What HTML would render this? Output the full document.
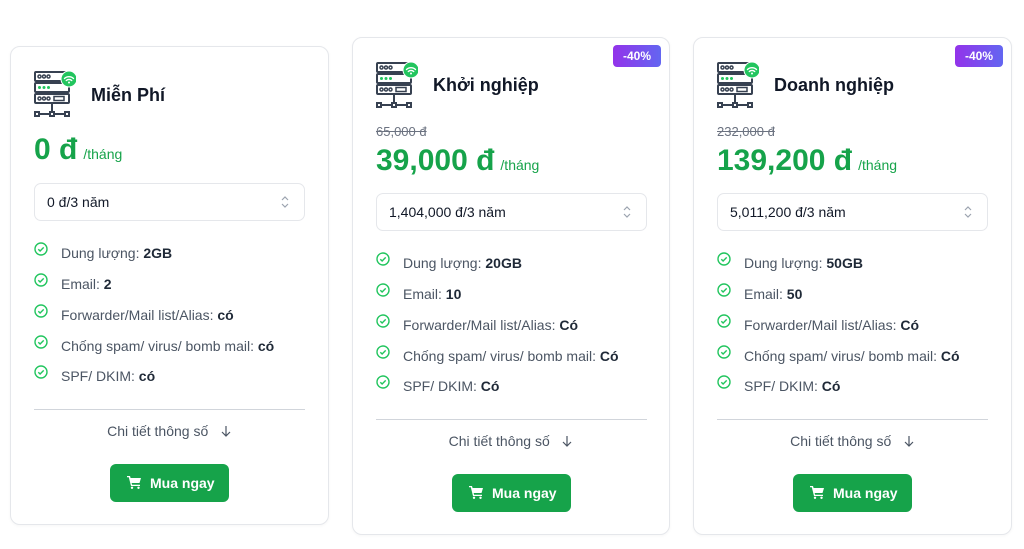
<!DOCTYPE html>
<html><head><meta charset="utf-8"><style>
*{margin:0;padding:0;box-sizing:border-box}
body{width:1024px;height:549px;background:#fff;font-family:"Liberation Sans",sans-serif;position:relative;overflow:hidden;color:#374151}
.card{position:absolute;border:1px solid #e5e7eb;border-radius:10px;background:#fff;box-shadow:0 1px 3px rgba(0,0,0,.04)}
.card>*{position:absolute}
.ic{left:23px;top:23px;width:42px;height:48px}
.title{left:80px;font-size:18px;font-weight:bold;color:#111827;line-height:22px}
.old{left:23px;font-size:13px;color:#6b7280;text-decoration:line-through;line-height:16px}
.price{left:23px;font-size:30px;font-weight:bold;color:#16a34a;line-height:36px;white-space:nowrap}
.price span{font-size:14px;font-weight:normal;margin-left:6px}
.sel{left:23px;width:271px;height:38px;border:1px solid #e5e7eb;border-radius:7px;font-size:14px;color:#111827;line-height:36px;padding-left:12px}
.sel svg{position:absolute;right:14px;top:11px}
.feat{left:23px;font-size:14px;line-height:18px;color:#4b5563;white-space:nowrap}
.feat b{color:#1f2937}
.feat svg{position:absolute;left:0;top:-2px}
.feat span{margin-left:27px}
.div{left:23px;width:271px;height:1px;background:#d1d5db}
.more{left:0;width:100%;text-align:center;font-size:14px;color:#4b5563;line-height:18px}
.btn{width:119px;height:38px;background:#16a34a;border-radius:6px;color:#fff;font-size:14px;font-weight:bold;line-height:38px;padding-left:40px}
.btn svg{position:absolute;left:17px;top:12px}
.badge{right:8px;top:7px;width:48px;height:22px;border-radius:4px;background:linear-gradient(90deg,#9333ea,#6366f1);color:#fff;font-size:12px;font-weight:bold;text-align:center;line-height:22px}
</style></head><body>

<!-- icon defs inline per card -->
<div class="card" style="left:10px;top:46px;width:319px;height:479px">
<svg class="ic" viewBox="0 0 42 48" fill="none" stroke="#374151" stroke-width="2"><rect x="1" y="2" width="34" height="9" rx="1"/><rect x="1" y="13" width="34" height="9" rx="1"/><rect x="1" y="24" width="34" height="9" rx="1"/><circle cx="5.5" cy="6.5" r="1.5" stroke-width="1.5"/><circle cx="10" cy="6.5" r="1.5" stroke-width="1.5"/><circle cx="14.5" cy="6.5" r="1.5" stroke-width="1.5"/><circle cx="5.5" cy="17.5" r="1.5" fill="#22c55e" stroke="none"/><circle cx="10" cy="17.5" r="1.5" fill="#22c55e" stroke="none"/><circle cx="14.5" cy="17.5" r="1.5" fill="#22c55e" stroke="none"/><circle cx="5.5" cy="28.5" r="1.5" stroke-width="1.5"/><circle cx="10" cy="28.5" r="1.5" stroke-width="1.5"/><circle cx="14.5" cy="28.5" r="1.5" stroke-width="1.5"/><rect x="20" y="26.5" width="10" height="4" stroke-width="1.5"/><line x1="18" y1="33" x2="18" y2="42"/><line x1="4" y1="44" x2="32" y2="44"/><rect x="1" y="42" width="4" height="4" fill="#fff"/><rect x="16" y="42" width="4" height="4" fill="#fff"/><rect x="31" y="42" width="4" height="4" fill="#fff"/><circle cx="35" cy="9" r="8" fill="#22c55e" stroke="#fff" stroke-width="1"/><path d="M30.5 8.5a6.5 6.5 0 0 1 9 0M32.3 10.5a4 4 0 0 1 5.4 0" stroke="#fff" stroke-width="1.4" stroke-linecap="round"/><circle cx="35" cy="12.5" r="1" fill="#fff" stroke="none"/></svg>
<div class="title" style="top:37px">Miễn Phí</div>
<div class="price" style="top:85px">0 đ<span>/tháng</span></div>
<div class="sel" style="top:136px">0 đ/3 năm<svg width="10" height="14" viewBox="0 0 10 14" fill="none" stroke="#9ca3af" stroke-width="1.2"><path d="M2 5l3-3 3 3M2 9l3 3 3-3"/></svg></div>
<div class="feat" style="top:197px"><svg width="14" height="14" viewBox="0 0 14 14" fill="none" stroke="#22c55e" stroke-width="1.4"><circle cx="7" cy="7" r="6"/><path d="M4.3 7.2l1.8 1.8 3.6-3.6"/></svg><span>Dung lượng: <b>2GB</b></span></div>
<div class="feat" style="top:228px"><svg width="14" height="14" viewBox="0 0 14 14" fill="none" stroke="#22c55e" stroke-width="1.4"><circle cx="7" cy="7" r="6"/><path d="M4.3 7.2l1.8 1.8 3.6-3.6"/></svg><span>Email: <b>2</b></span></div>
<div class="feat" style="top:259px"><svg width="14" height="14" viewBox="0 0 14 14" fill="none" stroke="#22c55e" stroke-width="1.4"><circle cx="7" cy="7" r="6"/><path d="M4.3 7.2l1.8 1.8 3.6-3.6"/></svg><span>Forwarder/Mail list/Alias: <b>có</b></span></div>
<div class="feat" style="top:290px"><svg width="14" height="14" viewBox="0 0 14 14" fill="none" stroke="#22c55e" stroke-width="1.4"><circle cx="7" cy="7" r="6"/><path d="M4.3 7.2l1.8 1.8 3.6-3.6"/></svg><span>Chống spam/ virus/ bomb mail: <b>có</b></span></div>
<div class="feat" style="top:320px"><svg width="14" height="14" viewBox="0 0 14 14" fill="none" stroke="#22c55e" stroke-width="1.4"><circle cx="7" cy="7" r="6"/><path d="M4.3 7.2l1.8 1.8 3.6-3.6"/></svg><span>SPF/ DKIM: <b>có</b></span></div>
<div class="div" style="top:362px"></div>
<div class="more" style="top:375px">Chi tiết thông số &nbsp; <svg width="12" height="12" viewBox="0 0 12 12" fill="none" stroke="#4b5563" stroke-width="1.2" style="vertical-align:-1px"><path d="M6 1v10M2 7l4 4 4-4"/></svg></div>
<div class="btn" style="left:99px;top:417px"><svg width="14" height="13" viewBox="0 0 14 13" fill="#fff"><path d="M0 0h3l.6 2H14l-1.5 5H4.6l.5 1.8H13V10H4L1.8 1.3H0z"/><circle cx="5" cy="11.8" r="1.2"/><circle cx="11.5" cy="11.8" r="1.2"/></svg>Mua ngay</div>
</div>

<div class="card" style="left:352px;top:37px;width:318px;height:498px">
<div class="badge">-40%</div>
<svg class="ic" viewBox="0 0 42 48" fill="none" stroke="#374151" stroke-width="2"><rect x="1" y="2" width="34" height="9" rx="1"/><rect x="1" y="13" width="34" height="9" rx="1"/><rect x="1" y="24" width="34" height="9" rx="1"/><circle cx="5.5" cy="6.5" r="1.5" stroke-width="1.5"/><circle cx="10" cy="6.5" r="1.5" stroke-width="1.5"/><circle cx="14.5" cy="6.5" r="1.5" stroke-width="1.5"/><circle cx="5.5" cy="17.5" r="1.5" fill="#22c55e" stroke="none"/><circle cx="10" cy="17.5" r="1.5" fill="#22c55e" stroke="none"/><circle cx="14.5" cy="17.5" r="1.5" fill="#22c55e" stroke="none"/><circle cx="5.5" cy="28.5" r="1.5" stroke-width="1.5"/><circle cx="10" cy="28.5" r="1.5" stroke-width="1.5"/><circle cx="14.5" cy="28.5" r="1.5" stroke-width="1.5"/><rect x="20" y="26.5" width="10" height="4" stroke-width="1.5"/><line x1="18" y1="33" x2="18" y2="42"/><line x1="4" y1="44" x2="32" y2="44"/><rect x="1" y="42" width="4" height="4" fill="#fff"/><rect x="16" y="42" width="4" height="4" fill="#fff"/><rect x="31" y="42" width="4" height="4" fill="#fff"/><circle cx="35" cy="9" r="8" fill="#22c55e" stroke="#fff" stroke-width="1"/><path d="M30.5 8.5a6.5 6.5 0 0 1 9 0M32.3 10.5a4 4 0 0 1 5.4 0" stroke="#fff" stroke-width="1.4" stroke-linecap="round"/><circle cx="35" cy="12.5" r="1" fill="#fff" stroke="none"/></svg>
<div class="title" style="top:36px">Khởi nghiệp</div>
<div class="old" style="top:86px">65,000 đ</div>
<div class="price" style="top:105px">39,000 đ<span>/tháng</span></div>
<div class="sel" style="top:155px">1,404,000 đ/3 năm<svg width="10" height="14" viewBox="0 0 10 14" fill="none" stroke="#9ca3af" stroke-width="1.2"><path d="M2 5l3-3 3 3M2 9l3 3 3-3"/></svg></div>
<div class="feat" style="top:216px"><svg width="14" height="14" viewBox="0 0 14 14" fill="none" stroke="#22c55e" stroke-width="1.4"><circle cx="7" cy="7" r="6"/><path d="M4.3 7.2l1.8 1.8 3.6-3.6"/></svg><span>Dung lượng: <b>20GB</b></span></div>
<div class="feat" style="top:247px"><svg width="14" height="14" viewBox="0 0 14 14" fill="none" stroke="#22c55e" stroke-width="1.4"><circle cx="7" cy="7" r="6"/><path d="M4.3 7.2l1.8 1.8 3.6-3.6"/></svg><span>Email: <b>10</b></span></div>
<div class="feat" style="top:278px"><svg width="14" height="14" viewBox="0 0 14 14" fill="none" stroke="#22c55e" stroke-width="1.4"><circle cx="7" cy="7" r="6"/><path d="M4.3 7.2l1.8 1.8 3.6-3.6"/></svg><span>Forwarder/Mail list/Alias: <b>Có</b></span></div>
<div class="feat" style="top:309px"><svg width="14" height="14" viewBox="0 0 14 14" fill="none" stroke="#22c55e" stroke-width="1.4"><circle cx="7" cy="7" r="6"/><path d="M4.3 7.2l1.8 1.8 3.6-3.6"/></svg><span>Chống spam/ virus/ bomb mail: <b>Có</b></span></div>
<div class="feat" style="top:339px"><svg width="14" height="14" viewBox="0 0 14 14" fill="none" stroke="#22c55e" stroke-width="1.4"><circle cx="7" cy="7" r="6"/><path d="M4.3 7.2l1.8 1.8 3.6-3.6"/></svg><span>SPF/ DKIM: <b>Có</b></span></div>
<div class="div" style="top:381px"></div>
<div class="more" style="top:394px">Chi tiết thông số &nbsp; <svg width="12" height="12" viewBox="0 0 12 12" fill="none" stroke="#4b5563" stroke-width="1.2" style="vertical-align:-1px"><path d="M6 1v10M2 7l4 4 4-4"/></svg></div>
<div class="btn" style="left:99px;top:436px"><svg width="14" height="13" viewBox="0 0 14 13" fill="#fff"><path d="M0 0h3l.6 2H14l-1.5 5H4.6l.5 1.8H13V10H4L1.8 1.3H0z"/><circle cx="5" cy="11.8" r="1.2"/><circle cx="11.5" cy="11.8" r="1.2"/></svg>Mua ngay</div>
</div>

<div class="card" style="left:693px;top:37px;width:319px;height:498px">
<div class="badge">-40%</div>
<svg class="ic" viewBox="0 0 42 48" fill="none" stroke="#374151" stroke-width="2"><rect x="1" y="2" width="34" height="9" rx="1"/><rect x="1" y="13" width="34" height="9" rx="1"/><rect x="1" y="24" width="34" height="9" rx="1"/><circle cx="5.5" cy="6.5" r="1.5" stroke-width="1.5"/><circle cx="10" cy="6.5" r="1.5" stroke-width="1.5"/><circle cx="14.5" cy="6.5" r="1.5" stroke-width="1.5"/><circle cx="5.5" cy="17.5" r="1.5" fill="#22c55e" stroke="none"/><circle cx="10" cy="17.5" r="1.5" fill="#22c55e" stroke="none"/><circle cx="14.5" cy="17.5" r="1.5" fill="#22c55e" stroke="none"/><circle cx="5.5" cy="28.5" r="1.5" stroke-width="1.5"/><circle cx="10" cy="28.5" r="1.5" stroke-width="1.5"/><circle cx="14.5" cy="28.5" r="1.5" stroke-width="1.5"/><rect x="20" y="26.5" width="10" height="4" stroke-width="1.5"/><line x1="18" y1="33" x2="18" y2="42"/><line x1="4" y1="44" x2="32" y2="44"/><rect x="1" y="42" width="4" height="4" fill="#fff"/><rect x="16" y="42" width="4" height="4" fill="#fff"/><rect x="31" y="42" width="4" height="4" fill="#fff"/><circle cx="35" cy="9" r="8" fill="#22c55e" stroke="#fff" stroke-width="1"/><path d="M30.5 8.5a6.5 6.5 0 0 1 9 0M32.3 10.5a4 4 0 0 1 5.4 0" stroke="#fff" stroke-width="1.4" stroke-linecap="round"/><circle cx="35" cy="12.5" r="1" fill="#fff" stroke="none"/></svg>
<div class="title" style="top:36px">Doanh nghiệp</div>
<div class="old" style="top:86px">232,000 đ</div>
<div class="price" style="top:105px">139,200 đ<span>/tháng</span></div>
<div class="sel" style="top:155px">5,011,200 đ/3 năm<svg width="10" height="14" viewBox="0 0 10 14" fill="none" stroke="#9ca3af" stroke-width="1.2"><path d="M2 5l3-3 3 3M2 9l3 3 3-3"/></svg></div>
<div class="feat" style="top:216px"><svg width="14" height="14" viewBox="0 0 14 14" fill="none" stroke="#22c55e" stroke-width="1.4"><circle cx="7" cy="7" r="6"/><path d="M4.3 7.2l1.8 1.8 3.6-3.6"/></svg><span>Dung lượng: <b>50GB</b></span></div>
<div class="feat" style="top:247px"><svg width="14" height="14" viewBox="0 0 14 14" fill="none" stroke="#22c55e" stroke-width="1.4"><circle cx="7" cy="7" r="6"/><path d="M4.3 7.2l1.8 1.8 3.6-3.6"/></svg><span>Email: <b>50</b></span></div>
<div class="feat" style="top:278px"><svg width="14" height="14" viewBox="0 0 14 14" fill="none" stroke="#22c55e" stroke-width="1.4"><circle cx="7" cy="7" r="6"/><path d="M4.3 7.2l1.8 1.8 3.6-3.6"/></svg><span>Forwarder/Mail list/Alias: <b>Có</b></span></div>
<div class="feat" style="top:309px"><svg width="14" height="14" viewBox="0 0 14 14" fill="none" stroke="#22c55e" stroke-width="1.4"><circle cx="7" cy="7" r="6"/><path d="M4.3 7.2l1.8 1.8 3.6-3.6"/></svg><span>Chống spam/ virus/ bomb mail: <b>Có</b></span></div>
<div class="feat" style="top:339px"><svg width="14" height="14" viewBox="0 0 14 14" fill="none" stroke="#22c55e" stroke-width="1.4"><circle cx="7" cy="7" r="6"/><path d="M4.3 7.2l1.8 1.8 3.6-3.6"/></svg><span>SPF/ DKIM: <b>Có</b></span></div>
<div class="div" style="top:381px"></div>
<div class="more" style="top:394px">Chi tiết thông số &nbsp; <svg width="12" height="12" viewBox="0 0 12 12" fill="none" stroke="#4b5563" stroke-width="1.2" style="vertical-align:-1px"><path d="M6 1v10M2 7l4 4 4-4"/></svg></div>
<div class="btn" style="left:99px;top:436px"><svg width="14" height="13" viewBox="0 0 14 13" fill="#fff"><path d="M0 0h3l.6 2H14l-1.5 5H4.6l.5 1.8H13V10H4L1.8 1.3H0z"/><circle cx="5" cy="11.8" r="1.2"/><circle cx="11.5" cy="11.8" r="1.2"/></svg>Mua ngay</div>
</div>
</body></html>
